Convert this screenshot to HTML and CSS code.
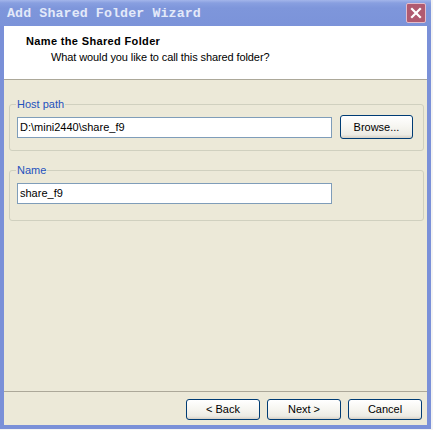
FILE: index.html
```html
<!DOCTYPE html>
<html>
<head>
<meta charset="utf-8">
<link rel="stylesheet" href="styles.css">
</head>
<body>
<div class="window">
  <div class="titlebar">
    <span class="title">Add Shared Folder Wizard</span>
    <span class="close"><svg width="12" height="12" viewBox="0 0 12 12"><path d="M2 2L10 10M10 2L2 10" stroke="#fff" stroke-width="2.2" stroke-linecap="square"/></svg></span>
  </div>
  <div class="frame">
    <div class="header">
      <div class="h-title">Name the Shared Folder</div>
      <div class="h-sub">What would you like to call this shared folder?</div>
    </div>
    <div class="content">
      <fieldset class="group host">
        <legend>Host path</legend>
        <div class="row">
          <div class="input">D:\mini2440\share_f9</div>
          <div class="btn browse">Browse...</div>
        </div>
      </fieldset>
      <fieldset class="group name">
        <legend>Name</legend>
        <div class="row">
          <div class="input">share_f9</div>
        </div>
      </fieldset>
    </div>
    <div class="footer">
      <div class="btn">&lt; Back</div>
      <div class="btn">Next &gt;</div>
      <div class="btn">Cancel</div>
    </div>
  </div>
</div>
</body>
</html>
```
FILE: styles.css
```css
* { box-sizing: border-box; }
html, body { margin: 0; padding: 0; background: #f4f4f4; }
body {
  font-family: "Liberation Sans", Arial, sans-serif;
  font-size: 11px;
  line-height: 13px;
  color: #000;
}
.window {
  width: 431px;
  height: 429px;
  display: flex;
  flex-direction: column;
}
.titlebar {
  height: 26px;
  flex: none;
  display: flex;
  align-items: center;
  padding: 0 7px 0 7px;
  background: linear-gradient(#a3b5ea 0px, #889fe0 3px, #7e96db 8px, #7b93d9 100%);
}
.title {
  font-family: "Liberation Mono", "DejaVu Sans Mono", monospace;
  font-weight: bold;
  font-size: 13.3px;
  line-height: 16px;
  color: #e3e9f9;
  padding-top: 1px;
  letter-spacing: 0.1px;
}
.close {
  margin-left: auto;
  width: 20px;
  height: 20px;
  border: 1px solid #e2bccb;
  border-radius: 2px;
  background: #b05a70;
  display: flex;
  align-items: center;
  justify-content: center;
  margin-right: -2px;
}
.frame {
  flex: 1;
  display: flex;
  flex-direction: column;
  border-left: 4px solid #7a90d8;
  border-right: 4px solid #7a90d8;
  border-bottom: 4px solid #7a90d8;
  background: #ece9d8;
}
.header {
  height: 54px;
  flex: none;
  background: #fff;
  border-bottom: 1px solid #aca899;
  padding: 9px 0 0 22px;
}
.h-title { font-weight: bold; letter-spacing: 0.35px; }
.h-sub { margin: 3px 0 0 25px; letter-spacing: -0.1px; }
.content { flex: 1; }
.group {
  margin: 0 3px 0 5px;
  border: 1px solid #d0d0bf;
  border-radius: 3px;
  min-width: 0;
}
.group legend {
  color: #1f52bd;
  padding: 0 1px;
  margin-left: -1px;
  line-height: 13px;
}
.host { margin-top: 18px; padding: 4px 10px 11px 7px; }
.name { margin-top: 13px; padding: 6px 10px 16px 7px; }
.row { display: flex; align-items: center; gap: 8px; }
.input {
  width: 315px;
  height: 21px;
  border: 1px solid #7f9db9;
  background: #fff;
  padding: 3px 0 0 2px;
}
.btn {
  width: 74px;
  height: 21px;
  border: 1px solid #003c74;
  border-radius: 3px;
  background: linear-gradient(#ffffff 0%, #f6f5f0 50%, #ecebe4 85%, #d6d0c5 100%);
  display: flex;
  align-items: center;
  justify-content: center;
}
.browse { width: 73px; height: 24px; }
.footer {
  flex: none;
  border-top: 1px solid #aca899;
  padding: 7px 5px 5px 0;
  display: flex;
  justify-content: flex-end;
  gap: 7px;
}
```
